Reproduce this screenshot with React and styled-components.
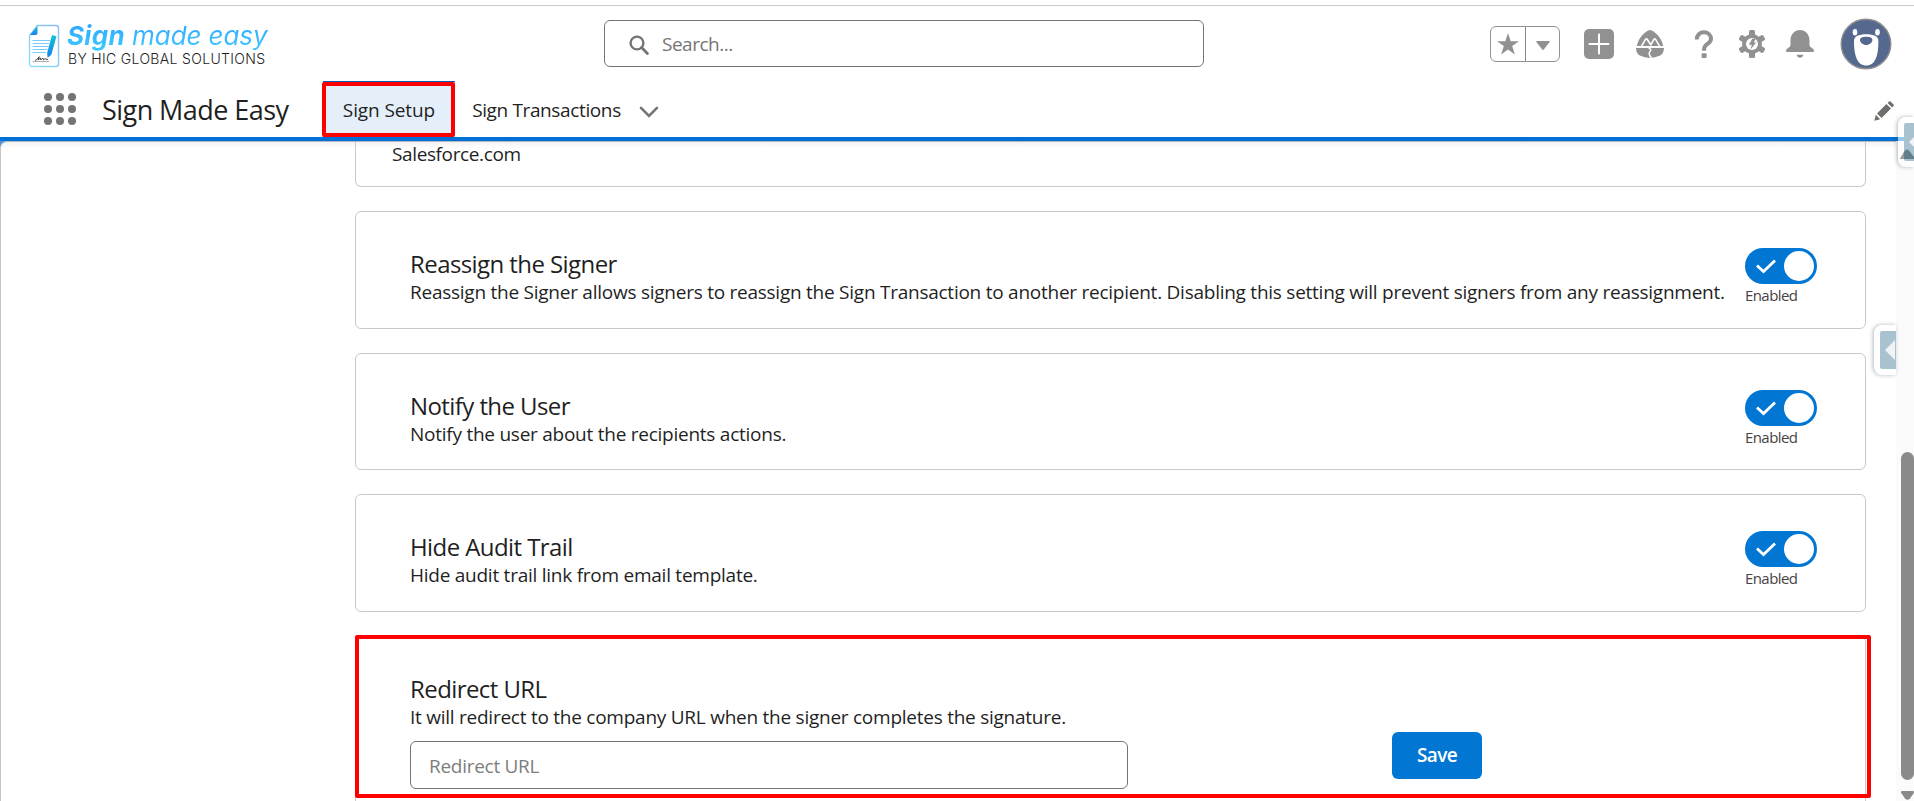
import React from "react";
import styled, { createGlobalStyle } from "styled-components";

const GlobalStyle = createGlobalStyle`
  *, *::before, *::after { box-sizing: border-box; }
  html, body { margin: 0; padding: 0; overflow: hidden; background: #fff; }
  body { font-family: "Open Sans", "Noto Sans", sans-serif; font-size: 19px; color: #1f1f1f; }
  svg { display: block; flex: none; }
`;

const Page = styled.div`
  position: relative;
  display: flex;
  flex-direction: column;
  width: 1914px;
  height: 801px;
  padding-top: 5px;
  overflow: hidden;
  background: #fff;
`;

const TopBar = styled.header`
  display: flex;
  align-items: flex-start;
  height: 76px;
  padding-left: 28px;
  border-top: 1px solid #c9c9c9;
`;

const Brand = styled.div`
  display: flex;
  align-items: flex-start;
  gap: 7px;
  width: 576px;
  padding-top: 18px;
`;

const BrandText = styled.div`
  display: flex;
  flex-direction: column;
  font-family: Inter, sans-serif;
`;

const BrandName = styled.div`
  margin-top: -4px;
  width: 215px;
  font-size: 26px;
  font-style: italic;
  line-height: 32px;
  white-space: nowrap;
  letter-spacing: -0.1px;
  color: transparent;
  background: linear-gradient(180deg, #2fa8ff 15%, #3cc4ff 80%);
  background-clip: text;
  -webkit-background-clip: text;

  strong { font-weight: 650; letter-spacing: 0.3px; }
`;

const BrandTagline = styled.div`
  margin-top: -2px;
  padding-left: 1px;
  font-size: 14px;
  font-weight: 300;
  line-height: 17px;
  letter-spacing: 0.33px;
  white-space: nowrap;
  color: #222;
`;

const SearchBox = styled.div`
  display: flex;
  align-items: center;
  gap: 13px;
  width: 600px;
  height: 47px;
  margin-top: 14px;
  padding-left: 24px;
  border: 1px solid #747474;
  border-radius: 6px;
  line-height: 28px;
  letter-spacing: -0.5px;
  color: #757575;

  svg { margin-top: 3px; }
`;

const Actions = styled.div`
  display: flex;
  align-items: center;
  height: 52px;
  margin: 12px 0 0 286px;
  color: #919191;
`;

const Favorites = styled.div`
  display: flex;
  width: 70px;
  height: 36px;
  margin-right: 24px;
  border: 1px solid #919191;
  border-radius: 6px;
`;

const FavoriteCell = styled.div`
  display: flex;
  flex: ${(p) => (p.$first ? "0 0 35px" : "1")};
  align-items: center;
  justify-content: center;
  border-right: ${(p) => (p.$first ? "1.5px solid #8a8a8a" : "0")};
`;

const ActionIcon = styled.div`
  width: ${(p) => p.$width}px;
  margin-right: ${(p) => p.$after}px;
`;

const NavBar = styled.nav`
  display: flex;
  align-items: center;
  height: 60px;
  flex: none;
  padding-left: 44px;
  border-bottom: 4px solid #0070d6;
`;

const Waffle = styled.div`
  display: grid;
  grid-template-columns: repeat(3, 8px);
  gap: 4px;
`;

const Dot = styled.i`
  width: 8px;
  height: 8px;
  border-radius: 50%;
  background: #747474;
`;

const AppName = styled.h1`
  width: 221px;
  margin: 1px 0 0 26px;
  font-size: 27px;
  font-weight: 400;
  line-height: 36px;
  letter-spacing: -0.55px;
  white-space: nowrap;
`;

const Tab = styled.a`
  position: relative;
  display: flex;
  align-items: center;
  align-self: stretch;
  justify-content: center;
  width: ${(p) => p.$width}px;
  border-top: 1px solid ${(p) => (p.$active ? "#0b5cad" : "transparent")};
  background: ${(p) => (p.$active ? "#e5effa" : "transparent")};
  letter-spacing: ${(p) => (p.$active ? "-0.1px" : "-0.37px")};
  line-height: 28px;
  white-space: nowrap;
`;

const Highlight = styled.div`
  position: absolute;
  border: 4px solid #ff0000;
  border-radius: 2px;
  pointer-events: none;
`;

const TabHighlight = styled(Highlight)`
  inset: 0 0 0 -1px;
`;

const CardHighlight = styled(Highlight)`
  top: -2px;
  left: -1px;
  width: 1516px;
  height: 163px;
`;

const ChevronSlot = styled.span`
  margin: 6px auto 0 1px;
`;

const EditSlot = styled.div`
  margin: 3px 20px 0 0;
`;

const Body = styled.div`
  display: flex;
  flex: 1;
  min-height: 0;
  background: linear-gradient(180deg, #4d94dc 0 8px, #fbfbfb 8px);
`;

const Content = styled.main`
  width: 1896px;
  padding-left: 354px;
  border-top: 1px solid #b4b8bd;
  border-left: 1px solid #c4c4c4;
  border-top-left-radius: 7px;
  background: #fff linear-gradient(180deg, #f4f4f4, #fff) 0 0 / 100% 7px no-repeat;
`;

const Stack = styled.div`
  display: flex;
  flex-direction: column;
  gap: 24px;
  width: 1511px;
`;

const Card = styled.section`
  position: relative;
  display: flex;
  justify-content: space-between;
  flex: none;
  height: ${(p) => p.$height}px;
  padding: 36px 48px 0 54px;
  border: 1px solid #c9c9c9;
  border-radius: 6px;
`;

const ClippedCard = styled.section`
  height: 45px;
  padding-left: 36px;
  border: 1px solid #c9c9c9;
  border-top: 0;
  border-radius: 0 0 6px 6px;
  line-height: 25px;
  letter-spacing: -0.38px;
`;

const CardTitle = styled.h2`
  margin: 0;
  font-size: 24px;
  font-weight: 400;
  line-height: 31px;
  letter-spacing: -0.58px;
`;

const CardText = styled.p`
  margin: 0;
  line-height: 26px;
  letter-spacing: -0.25px;
  white-space: nowrap;
`;

const Toggle = styled.div`
  display: flex;
  flex-direction: column;
  width: 72px;
`;

const ToggleTrack = styled.div`
  display: flex;
  align-items: center;
  gap: 8px;
  height: 36px;
  padding-left: 11px;
  border-radius: 18px;
  background: #0176d3;
`;

const Knob = styled.span`
  width: 30px;
  height: 30px;
  border-radius: 50%;
  background: #fff;
`;

const ToggleLabel = styled.span`
  margin-top: 2px;
  font-size: 15px;
  line-height: 19px;
  letter-spacing: -0.58px;
  color: #444;
`;

const UrlForm = styled.div`
  display: grid;
  grid-template-columns: 982px 90px;
  align-items: end;
  align-content: start;
`;

const UrlField = styled.div`
  width: 718px;
  height: 48px;
  margin-top: 11px;
  padding-left: 18px;
  border: 1px solid #747474;
  border-radius: 6px;
  line-height: 48px;
  letter-spacing: -0.28px;
  color: #7d7d7d;
`;

const SaveButton = styled.button`
  height: 47px;
  margin: 0 0 10px;
  padding: 0 0 1px;
  border: 0;
  border-radius: 6px;
  background: #0176d3;
  color: #fff;
  font: 600 19px "Open Sans", sans-serif;
  letter-spacing: -0.6px;
`;

const Gutter = styled.div`
  display: flex;
  flex-direction: column;
  align-items: flex-end;
  width: 18px;
  padding-top: 311px;
  background: #fbfbfb;
`;

const Thumb = styled.div`
  width: 13px;
  height: 332px;
  margin-bottom: 11px;
  border-radius: 7px;
  background: #8a8a8a;
`;

const SidePanelTab = styled.div`
  position: absolute;
  top: ${(p) => p.$top}px;
  left: ${(p) => p.$left}px;
  display: flex;
  align-items: center;
  width: ${(p) => 1914 - p.$clip - p.$left}px;
  height: 50px;
  padding-left: 6px;
  border-radius: 8px 0 0 8px;
  background: ${(p) => (p.$faded ? "rgba(255,255,255,.6)" : "#fff")};
  box-shadow: -1px 0 4px rgba(60, 80, 90, 0.4);
`;

const SidePanelFace = styled.div`
  position: relative;
  display: flex;
  align-items: center;
  padding-left: 5px;
  flex: 1;
  min-width: 0;
  height: 38px;
  border-radius: 2px 0 0 2px;
  background: #a8c3cf;
`;

const ScrollUp = styled.svg`
  position: absolute;
  top: 26px;
  left: -4px;
`;

const CARDS = [
  {
    title: "Reassign the Signer",
    text: "Reassign the Signer allows signers to reassign the Sign Transaction to another recipient. Disabling this setting will prevent signers from any reassignment.",
    height: 118,
  },
  { title: "Notify the User", text: "Notify the user about the recipients actions.", height: 117 },
  { title: "Hide Audit Trail", text: "Hide audit trail link from email template.", height: 118 },
];

function LogoMark() {
  return (
    <svg width="32" height="44" viewBox="0 0 32 44" fill="none">
      <defs>
        <linearGradient id="edge" x1="0" y1="1" x2="1" y2="0">
          <stop offset="0" stopColor="#8fe3f5" />
          <stop offset="1" stopColor="#8db8f5" />
        </linearGradient>
        <linearGradient id="ink" x1="0" y1="0" x2="0" y2="1">
          <stop offset="0" stopColor="#12c4d2" />
          <stop offset="1" stopColor="#1480f0" />
        </linearGradient>
      </defs>
      <path d="M9.5 1.5H28a2.500 2.500 0 0 1 2.500 2.500V40a2.500 2.500 0 0 1-2.500 2.500H4A2.500 2.500 0 0 1 1.500 40V11.500z" stroke="url(#edge)" strokeWidth="1.400" />
      <path d="M9.500 2v7a2 2 0 0 1-2 2H2z" fill="url(#ink)" />
      <path d="M4.500 16.500H22M4.500 19.500H21M4.500 22.500H20.500M4.500 25.500H19.500M4.500 28.500H18" stroke="#7accfb" strokeWidth="1.100" />
      <path d="M24 11l4.500 1.200-5.200 18.600-3.600 3-.6-4.600z" fill="url(#ink)" />
      <path d="M4.500 37.500H21" stroke="#999" strokeWidth=".8" />
      <path d="M7 36.500c3-1 5-5 4-3.500l-1 3 2.500-2 .3 2 2-2 .6 1.800 1.600-1 3 .7" stroke="#333" strokeWidth=".9" />
    </svg>
  );
}

function Header() {
  return (
    <TopBar>
      <Brand>
        <LogoMark />
        <BrandText>
          <BrandName><strong>Sign</strong> made easy</BrandName>
          <BrandTagline>BY HIC GLOBAL SOLUTIONS</BrandTagline>
        </BrandText>
      </Brand>
      <SearchBox>
        <svg width="20" height="20" viewBox="0 0 20 20" fill="none" stroke="#747474">
          <circle cx="8" cy="8" r="6.400" strokeWidth="2.400" />
          <path d="M12.600 12.600l5.800 5.800" strokeWidth="2.800" strokeLinecap="round" />
        </svg>
        <span>Search...</span>
      </SearchBox>
      <Actions>
        <Favorites>
          <FavoriteCell $first>
            <svg width="22" height="22" viewBox="0 0 22 22" fill="currentColor">
              <path d="M11 0l2.700 8.200H22l-6.800 4.900 2.700 8.500L11 16.500l-6.900 5.100 2.700-8.500L0 8.200h8.300z" />
            </svg>
          </FavoriteCell>
          <FavoriteCell>
            <svg width="14" height="12" viewBox="0 0 14 12" fill="currentColor">
              <path d="M.8 3h12.400q.9.200.4.900L7.800 11.500q-.8.800-1.600 0L.4 3.900Q0 3.200.8 3z" />
            </svg>
          </FavoriteCell>
        </Favorites>
        <ActionIcon $width={30} $after={22}>
          <svg width="30" height="30" viewBox="0 0 30 30">
            <rect width="30" height="30" rx="5" fill="currentColor" />
            <path d="M15 5.500v19M5.500 15h19" stroke="#fff" strokeWidth="2" strokeLinecap="round" />
          </svg>
        </ActionIcon>
        <ActionIcon $width={28} $after={30}>
          <svg width="28" height="28" viewBox="0 0 28 28">
            <path d="M.8 16C2 10 6 3.800 12.300.5q1.700-.8 3.400 0C22 3.800 26 10 27.200 16z" fill="currentColor" />
            <path d="M5 16.800L9.700 9.200q.7-.9 1.400 0l3.700 5.600 3.200-5.600q.7-.9 1.400 0L24 16.800" fill="none" stroke="#fff" strokeWidth="1.600" strokeLinejoin="round" />
            <path d="M0 18h28q-.3 5.500-3.800 7.600Q19 28 14 28T3.800 25.600Q.3 23.500 0 18z" fill="currentColor" />
            <path d="M12.500 18q3.700 1.200 1.500 3.500t1.500 6.500" fill="none" stroke="#fff" strokeWidth="1.500" />
          </svg>
        </ActionIcon>
        <ActionIcon $width={20} $after={25}>
          <svg width="20" height="28" viewBox="0 0 20 28" fill="none">
            <path d="M2.700 9.500C2.700 4.900 6 2.300 9.900 2.300c4.100 0 7.100 2.700 7.100 6.500 0 5.300-6.900 5-6.900 10.200v1.700" stroke="currentColor" strokeWidth="4" />
            <rect x="7.600" y="23.200" width="5" height="4.800" rx="1" fill="currentColor" />
          </svg>
        </ActionIcon>
        <ActionIcon $width={26} $after={21}>
          <svg width="26" height="28" viewBox="0 0 26 28">
            <g fill="currentColor">
              <circle cx="13" cy="14" r="10" />
              {[0, 60, 120].map((a) => (
                <rect key={a} x="10" y="0" width="6" height="28" rx="1.500" transform={`rotate(${a} 13 14)`} />
              ))}
            </g>
            <circle cx="13" cy="14" r="6" fill="#fff" />
            <path d="M13.300 8.800l3.200 0-1.600 3.700h2.300l-5.700 6.900 1.300-4.700H9.800z" fill="currentColor" />
          </svg>
        </ActionIcon>
        <ActionIcon $width={28} $after={26}>
          <svg width="28" height="28" viewBox="0 0 28 28" fill="currentColor">
            <path d="M4.500 10.500C4.500 4.500 8.500 0 14 0s9.500 4.500 9.500 10.500V15q0 2 2.500 3 2 .8 2 3 0 1-1 1H1q-1 0-1-1 0-2.200 2-3 2.500-1 2.500-3z" />
            <path d="M10.600 24.800h6.800q-.8 2.900-3.400 2.900t-3.400-2.900z" />
          </svg>
        </ActionIcon>
        <svg width="52" height="52" viewBox="0 0 52 52">
          <circle cx="26" cy="26" r="24.800" fill="#54698d" stroke="#8f8f8f" strokeWidth="1.400" />
          <g fill="#fff">
            <ellipse cx="15" cy="14.200" rx="2.300" ry="3.300" />
            <ellipse cx="37.500" cy="14.200" rx="2.300" ry="3.300" />
            <path d="M14 23c0-4.700 4.500-6.700 12.200-6.700S38.400 18.300 38.400 23C38.400 37 35.500 47.600 26.200 47.600S14 37 14 23z" />
          </g>
          <path d="M20 22c0-2.500 3-3.200 6.200-3.200s6.200.7 6.200 3.200-3 5-6.200 5-6.200-2.500-6.200-5z" fill="#54698d" />
        </svg>
      </Actions>
    </TopBar>
  );
}

function Navigation() {
  return (
    <NavBar>
      <Waffle>{Array.from({ length: 9 }, (_, i) => <Dot key={i} />)}</Waffle>
      <AppName>Sign Made Easy</AppName>
      <Tab $width={132} $active>
        Sign Setup
        <TabHighlight />
      </Tab>
      <Tab $width={183}>Sign Transactions</Tab>
      <ChevronSlot>
        <svg width="20" height="12" viewBox="0 0 20 12" fill="none">
          <path d="M2 1.800l8 8 8-8" stroke="#747474" strokeWidth="2.600" strokeLinecap="round" />
        </svg>
      </ChevronSlot>
      <EditSlot>
        <svg width="20" height="20" viewBox="0 0 20 20" fill="#706e6b">
          <path d="M.3 19.700l1.500-5.900 4.400 4.400z" />
          <path d="M3 12.500L12.400 3l4.600 4.600-9.400 9.500z" />
          <path d="M13.600 1.900L15 .5q.8-.6 1.600 0l2.900 2.900q.7.800 0 1.700l-1.400 1.400z" />
        </svg>
      </EditSlot>
    </NavBar>
  );
}

function EnabledToggle() {
  return (
    <Toggle>
      <ToggleTrack>
        <svg width="20" height="15" viewBox="0 0 20 15" fill="none">
          <path d="M1 6.500l6.500 6L19 1.500" stroke="#fff" strokeWidth="2.800" />
        </svg>
        <Knob />
      </ToggleTrack>
      <ToggleLabel>Enabled</ToggleLabel>
    </Toggle>
  );
}

function PanelHandle(props) {
  return (
    <SidePanelTab {...props}>
      <SidePanelFace>
        <svg width="10" height="20" viewBox="0 0 10 20">
          <path d="M0 10L10 0v20z" fill="#f1f3f4" />
        </svg>
        {props.$faded && (
          <ScrollUp width="14" height="10" viewBox="0 0 14 10">
            <path d="M0 10L5 1.500q2-2 4 0L14 8v2z" fill="#607f89" />
            <path d="M0 10l4-7v7z" fill="#9a9fa1" />
          </ScrollUp>
        )}
      </SidePanelFace>
    </SidePanelTab>
  );
}

export default function App() {
  return (
    <Page>
      <GlobalStyle />
      <Header />
      <Navigation />
      <Body>
        <Content>
          <Stack>
            <ClippedCard>Salesforce.com</ClippedCard>
            {CARDS.map((c) => (
              <Card key={c.title} $height={c.height}>
                <div>
                  <CardTitle>{c.title}</CardTitle>
                  <CardText>{c.text}</CardText>
                </div>
                <EnabledToggle />
              </Card>
            ))}
            <Card $height={190}>
              <UrlForm>
                <div>
                  <CardTitle>Redirect URL</CardTitle>
                  <CardText>It will redirect to the company URL when the signer completes the signature.</CardText>
                  <UrlField>Redirect URL</UrlField>
                </div>
                <SaveButton>Save</SaveButton>
              </UrlForm>
              <CardHighlight />
            </Card>
          </Stack>
        </Content>
        <Gutter>
          <Thumb />
          <svg width="13" height="10" viewBox="0 0 13 10">
            <path d="M1 0h11q1.500.5.800 2L9 7.500q-2.500 2.500-5 0L.2 2Q-.5.500 1 0z" fill="#8a8a8a" />
          </svg>
        </Gutter>
      </Body>
      <PanelHandle $top={117} $left={1898} $clip={0} $faded />
      <PanelHandle $top={325} $left={1874} $clip={18} />
    </Page>
  );
}
